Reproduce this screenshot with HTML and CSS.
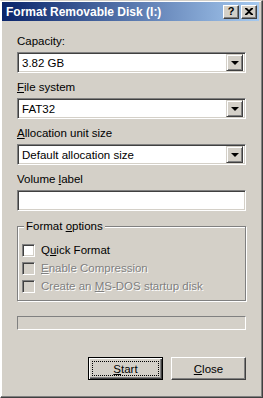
FILE: index.html
```html
<!DOCTYPE html>
<html lang="en">
<head>
    <meta charset="UTF-8">
    <title>Format Removable Disk (I:)</title>
    <link rel="stylesheet" href="styles.css">
</head>
<body>

    <div class="window">
        <!-- Title bar -->
        <div class="titlebar">
            <span class="title">Format Removable Disk (I:)</span>
            <div class="caption-buttons">
                <span class="cap-btn">?</span>
                <span class="cap-btn close">
                    <svg width="8" height="7" viewBox="0 0 8 7"><path d="M0 0h2l2 2 2-2h2v1L5 3.5 8 6v1H6L4 5 2 7H0V6l3-2.5L0 1z" fill="#000"/></svg>
                </span>
            </div>
        </div>

        <div class="content">
            <label class="field-label">Capacity:</label>
            <div class="combo"><span class="combo-text">3.82 GB</span><span class="combo-btn"><i></i></span></div>

            <label class="field-label"><u>F</u>ile system</label>
            <div class="combo"><span class="combo-text">FAT32</span><span class="combo-btn"><i></i></span></div>

            <label class="field-label"><u>A</u>llocation unit size</label>
            <div class="combo"><span class="combo-text">Default allocation size</span><span class="combo-btn"><i></i></span></div>

            <label class="field-label">Volume <u>l</u>abel</label>
            <div class="textbox"></div>

            <!-- Format options -->
            <div class="groupbox">
                <span class="legend">Format <u>o</u>ptions</span>
                <div class="check"><span class="box"></span><span>Q<u>u</u>ick Format</span></div>
                <div class="check disabled"><span class="box"></span><span><u>E</u>nable Compression</span></div>
                <div class="check disabled"><span class="box"></span><span>Create an <u>M</u>S-DOS startup disk</span></div>
            </div>

            <div class="progress"></div>

            <div class="actions">
                <button class="btn default"><span class="focus"><u>S</u>tart</span></button>
                <button class="btn"><span><u>C</u>lose</span></button>
            </div>
        </div>
    </div>

</body>
</html>
```

FILE: styles.css
```css
body {
    margin: 0;
    background-color: #d4d0c8;
    font-family: Tahoma, "Liberation Sans", Arial, sans-serif;
    font-size: 11px;
    color: #000;
}

.window {
    width: 263px;
    height: 398px;
    box-sizing: border-box;
    background-color: #d4d0c8;
    border-top: 1px solid #d4d0c8;
    border-left: 1px solid #fff;
    border-right: 1px solid #404040;
    border-bottom: 1px solid #404040;
    box-shadow: inset -1px -1px 0 #808080, inset 1px 1px 0 #fff;
    padding: 1px 3px 3px 1px;
    display: flex;
    flex-direction: column;
}

.titlebar {
    height: 19px;
    background: linear-gradient(to right, #0a246a, #a6caf0);
    display: flex;
    align-items: center;
    justify-content: space-between;
    padding: 0 2px 0 4px;
}

.title {
    color: #fff;
    font-weight: bold;
    font-size: 12px;
}

.caption-buttons {
    display: flex;
    gap: 2px;
}

.cap-btn {
    width: 16px;
    height: 14px;
    box-sizing: border-box;
    background-color: #d4d0c8;
    border-top: 1px solid #fff;
    border-left: 1px solid #fff;
    border-right: 1px solid #404040;
    border-bottom: 1px solid #404040;
    box-shadow: inset -1px -1px 0 #808080;
    display: flex;
    align-items: center;
    justify-content: center;
    font-weight: bold;
    font-size: 11px;
    line-height: 1;
}

.content {
    flex: 1;
    padding: 14px 13px 0 15px;
    display: flex;
    flex-direction: column;
}

.field-label {
    display: block;
    line-height: 13px;
    margin-bottom: 4px;
    font-size: 11.5px;
}

.combo {
    height: 21px;
    box-sizing: border-box;
    background-color: #fff;
    border-top: 1px solid #808080;
    border-left: 1px solid #808080;
    border-right: 1px solid #fff;
    border-bottom: 1px solid #fff;
    box-shadow: inset 1px 1px 0 #404040, inset -1px -1px 0 #d4d0c8;
    display: flex;
    align-items: center;
    padding: 2px;
    margin-bottom: 8px;
    font-size: 11.5px;
}

.combo-text {
    flex: 1;
    padding-left: 2px;
}

.combo-btn {
    width: 17px;
    height: 17px;
    box-sizing: border-box;
    background-color: #d4d0c8;
    border-top: 1px solid #d4d0c8;
    border-left: 1px solid #d4d0c8;
    border-right: 1px solid #404040;
    border-bottom: 1px solid #404040;
    box-shadow: inset 1px 1px 0 #fff, inset -1px -1px 0 #808080;
    display: flex;
    align-items: center;
    justify-content: center;
}

.combo-btn i {
    width: 0;
    height: 0;
    border-left: 4px solid transparent;
    border-right: 4px solid transparent;
    border-top: 4px solid #000;
}

.textbox {
    height: 21px;
    box-sizing: border-box;
    background-color: #fff;
    border-top: 1px solid #808080;
    border-left: 1px solid #808080;
    border-right: 1px solid #fff;
    border-bottom: 1px solid #fff;
    box-shadow: inset 1px 1px 0 #404040, inset -1px -1px 0 #d4d0c8;
    margin-bottom: 15px;
}

.groupbox {
    position: relative;
    height: 75px;
    box-sizing: border-box;
    border: 1px solid #808080;
    box-shadow: 1px 1px 0 #fff, inset 1px 1px 0 #fff;
    padding: 14px 0 0 4px;
    margin-bottom: 15px;
    font-size: 11.5px;
}

.legend {
    position: absolute;
    top: -7px;
    left: 6px;
    padding: 0 2px;
    background-color: #d4d0c8;
}

.check {
    display: flex;
    align-items: center;
    height: 18px;
    gap: 6px;
}

.box {
    width: 13px;
    height: 13px;
    box-sizing: border-box;
    background-color: #fff;
    border-top: 1px solid #808080;
    border-left: 1px solid #808080;
    border-right: 1px solid #fff;
    border-bottom: 1px solid #fff;
    box-shadow: inset 1px 1px 0 #404040, inset -1px -1px 0 #d4d0c8;
}

.check.disabled {
    color: #808080;
    text-shadow: 1px 1px 0 #fff;
}

.check.disabled .box {
    background-color: #d4d0c8;
}

.progress {
    height: 14px;
    box-sizing: border-box;
    border-top: 1px solid #808080;
    border-left: 1px solid #808080;
    border-right: 1px solid #fff;
    border-bottom: 1px solid #fff;
}

.actions {
    margin-top: auto;
    margin-bottom: 14px;
    display: flex;
    justify-content: flex-end;
    gap: 8px;
}

.btn {
    width: 75px;
    height: 23px;
    box-sizing: border-box;
    background-color: #d4d0c8;
    font-family: inherit;
    font-size: 11.5px;
    color: #000;
    border-top: 1px solid #fff;
    border-left: 1px solid #fff;
    border-right: 1px solid #404040;
    border-bottom: 1px solid #404040;
    box-shadow: inset -1px -1px 0 #808080;
    padding: 0;
    display: flex;
    align-items: center;
    justify-content: center;
}

.btn.default {
    border: 1px solid #000;
    box-shadow: inset 1px 1px 0 #fff, inset -1px -1px 0 #404040, inset -2px -2px 0 #808080;
    padding: 3px;
}

.focus {
    flex: 1;
    align-self: stretch;
    display: flex;
    align-items: center;
    justify-content: center;
    border: 1px dotted #000;
}
```
